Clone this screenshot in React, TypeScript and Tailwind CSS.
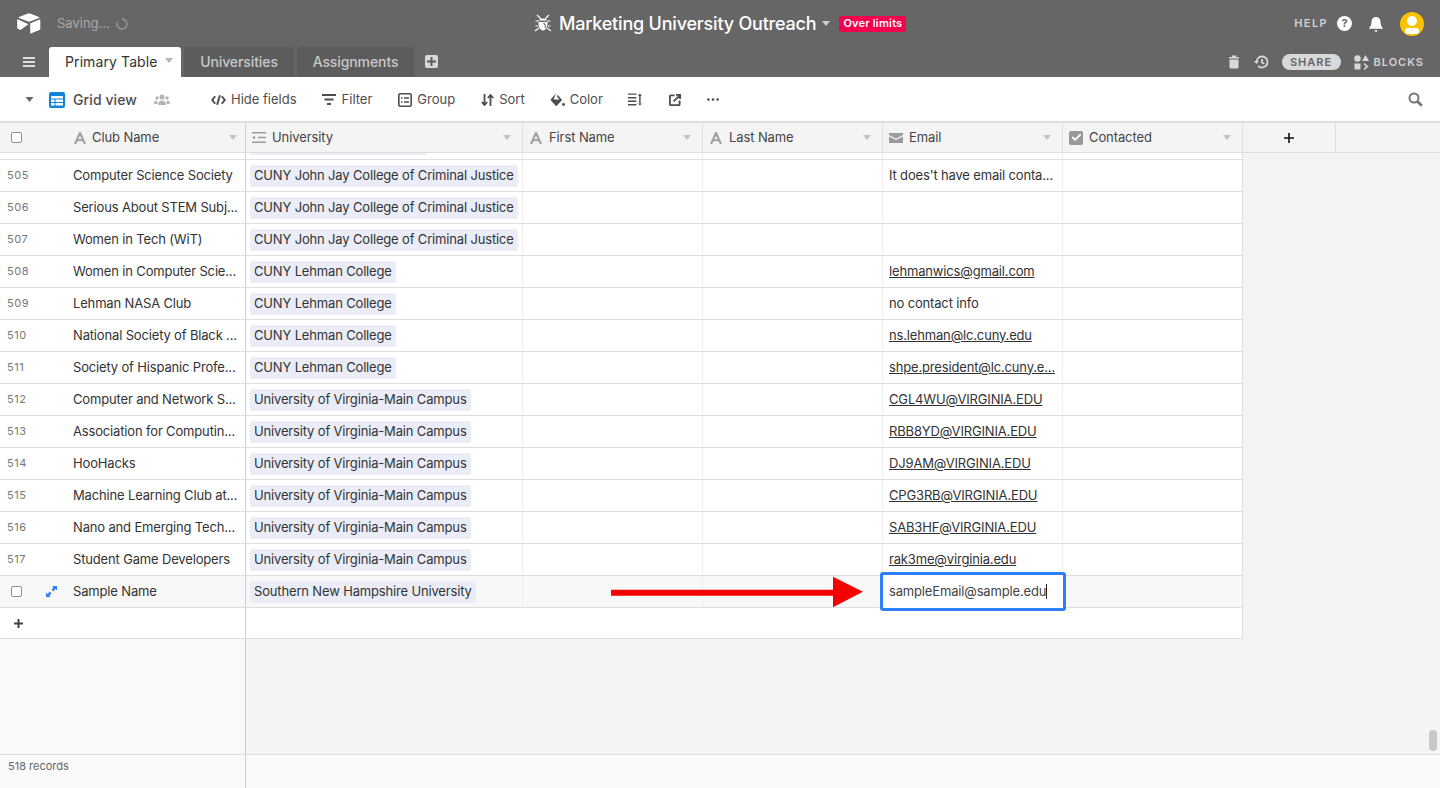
import { Check } from 'lucide-react';

const rows = [
  { id: 505, name: 'Computer Science Society', uni: 'CUNY John Jay College of Criminal Justice', email: "It does't have email conta...", link: false },
  { id: 506, name: 'Serious About STEM Subj...', uni: 'CUNY John Jay College of Criminal Justice', email: '', link: false },
  { id: 507, name: 'Women in Tech (WiT)', uni: 'CUNY John Jay College of Criminal Justice', email: '', link: false },
  { id: 508, name: 'Women in Computer Scie...', uni: 'CUNY Lehman College', email: 'lehmanwics@gmail.com', link: true },
  { id: 509, name: 'Lehman NASA Club', uni: 'CUNY Lehman College', email: 'no contact info', link: false },
  { id: 510, name: 'National Society of Black ...', uni: 'CUNY Lehman College', email: 'ns.lehman@lc.cuny.edu', link: true },
  { id: 511, name: 'Society of Hispanic Profe...', uni: 'CUNY Lehman College', email: 'shpe.president@lc.cuny.e...', link: true },
  { id: 512, name: 'Computer and Network S...', uni: 'University of Virginia-Main Campus', email: 'CGL4WU@VIRGINIA.EDU', link: true },
  { id: 513, name: 'Association for Computin...', uni: 'University of Virginia-Main Campus', email: 'RBB8YD@VIRGINIA.EDU', link: true },
  { id: 514, name: 'HooHacks', uni: 'University of Virginia-Main Campus', email: 'DJ9AM@VIRGINIA.EDU', link: true },
  { id: 515, name: 'Machine Learning Club at...', uni: 'University of Virginia-Main Campus', email: 'CPG3RB@VIRGINIA.EDU', link: true },
  { id: 516, name: 'Nano and Emerging Tech...', uni: 'University of Virginia-Main Campus', email: 'SAB3HF@VIRGINIA.EDU', link: true },
  { id: 517, name: 'Student Game Developers', uni: 'University of Virginia-Main Campus', email: 'rak3me@virginia.edu', link: true },
];

function Caret({ className = '' }: { className?: string }) {
  return (
    <svg viewBox="0 0 8 5" className={`w-2 h-[5px] ${className}`} fill="currentColor">
      <path d="M0 0h8L4 5z" />
    </svg>
  );
}

function TextIcon() {
  return (
    <svg viewBox="0 0 12 12" className="w-3 h-3 text-[#a0a0a0]" fill="none" stroke="currentColor" strokeWidth="2.1">
      <path d="M1 12 6 1l5 11M2.800 8.200h6.400" />
    </svg>
  );
}

function ColumnHead({ width, label, icon }: { width: string; label: string; icon: React.ReactNode }) {
  return (
    <div className={`${width} shrink-0 h-full flex items-center pl-[6px] pr-[11px] border-r border-[#dedede]`}>
      <span className="w-[14px] flex justify-center">{icon}</span>
      <span className="ml-[6px] text-[13px] text-[#444444] tracking-[-0.1px]">{label}</span>
      <Caret className="ml-auto text-[#c4c4c4]" />
    </div>
  );
}

function Chip({ text }: { text: string }) {
  return (
    <span className="ml-[4px] h-[22px] px-[4px] flex items-center rounded-[3px] bg-[#eaedf8] text-[13px] text-[#333333] tracking-[-0.16px] whitespace-nowrap">
      {text}
    </span>
  );
}

function DataCells({ uni, email, link }: { uni?: string; email?: string; link?: boolean }) {
  return (
    <>
      <div className="w-[277px] shrink-0 h-full flex items-center border-r border-[#eeeeee]">{uni && <Chip text={uni} />}</div>
      <div className="w-[180px] shrink-0 h-full border-r border-[#eeeeee]" />
      <div className="w-[180px] shrink-0 h-full border-r border-[#eeeeee]" />
      <div className="w-[180px] shrink-0 h-full flex items-center pl-[6px] border-r border-[#eeeeee] text-[13px] text-[#333333] tracking-[-0.16px] whitespace-nowrap overflow-hidden">
        <span className={link ? 'underline' : ''}>{email}</span>
      </div>
      <div className="w-[180px] shrink-0 h-full" />
    </>
  );
}

export default function App() {
  return (
    <div className="relative w-[1440px] h-[788px] overflow-hidden flex flex-col bg-[#f4f4f4] font-['Inter','Noto_Sans',sans-serif]">
      {/* top bar */}
      <div className="relative h-[47px] shrink-0 bg-[#666666] flex items-center">
        <svg viewBox="0 0 24 21" className="ml-[17px] w-[24px] h-[21px]" fill="#ffffff">
          <path d="M11 .6 2 4.100c-.4.2-.4.6 0 .8l9.200 3.600c.6.200 1.200.2 1.800 0l9-3.600c.4-.2.400-.6 0-.8L13 .6c-.7-.2-1.300-.2-2 0z" />
          <path d="M13.200 10.600V20c0 .3.300.5.600.4l9.200-3.600c.2-.1.300-.3.300-.5V7c0-.3-.3-.5-.6-.4l-9.200 3.600c-.2.100-.3.200-.3.400z" />
          <path d="M11 10.900 1 6.400c-.4-.1-.8.100-.8.500v8.300c0 .2.100.3.300.4l3 1.400L11 11.500c.3-.2.200-.5 0-.6z" />
        </svg>
        <span className="ml-[16px] text-[13px] text-[#a8a8a8]">Saving...</span>
        <svg viewBox="0 0 12 12" className="ml-[6px] w-[12px] h-[12px]" fill="none" stroke="#9a9a9a" strokeWidth="1.300">
          <path d="M6 1a5 5 0 1 1-4.600 3" />
        </svg>
        <div className="absolute left-[534px] top-0 h-[47px] flex items-center">
          <svg viewBox="0 0 18 19" className="w-[18px] h-[19px]" fill="none" stroke="#ffffff" strokeWidth="1.100">
            <path d="M3 1 7 5M15 1l-4 4M1.500 7H5M16.500 7H13M1 17l4-3M17 17l-4-3M1.500 12H4M16.500 12H14" />
            <path d="M5 6.500C5.500 3.800 12.500 3.800 13 6.500z" fill="#ffffff" stroke="none" />
            <path d="M4.500 8h9c.5 4-1.500 8.500-4.500 8.500S4 12 4.500 8z" fill="#ffffff" stroke="none" />
            <path d="M9.500 9c2 1.500 2.500 3 1.500 5" stroke="#666666" />
          </svg>
          <span className="ml-[7px] text-[18px] font-medium text-white tracking-[-0.2px] whitespace-nowrap">Marketing University Outreach</span>
          <Caret className="ml-[6px] text-[#cfcfcf]" />
          <span className="ml-[9px] h-[16px] px-[4px] flex items-center rounded-[3px] bg-[#f5004f] text-white text-[11px] font-semibold tracking-[0.2px] whitespace-nowrap">Over limits</span>
        </div>
        <div className="ml-auto flex items-center pr-[16px]">
          <span className="text-[11px] font-semibold tracking-[1.4px] text-[#d2d2d2]">HELP</span>
          <span className="ml-[9px] w-[15px] h-[15px] rounded-full bg-white flex items-center justify-center text-[#666666] text-[11px] font-bold">?</span>
          <svg viewBox="0 0 14 16" className="ml-[17px] w-[14px] h-[16px]" fill="#ffffff">
            <path d="M7 1a4.500 4.500 0 0 0-4.500 4.500c0 4-1.500 5.500-2.300 6.500-.2.300 0 .7.400.7h12.800c.4 0 .6-.4.400-.7-.8-1-2.300-2.500-2.300-6.500A4.500 4.500 0 0 0 7 1zM5.500 14.300h3a1.500 1.500 0 0 1-3 0z" />
          </svg>
          <span className="ml-[17px] relative w-[24px] h-[24px] rounded-full bg-[#fcc400] overflow-hidden">
            <span className="absolute left-[7px] top-[4px] w-[10px] h-[10px] rounded-full bg-white" />
            <span className="absolute left-[5px] top-[16px] w-[14px] h-[6px] rounded-full bg-white" />
          </span>
        </div>
      </div>

      {/* tabs */}
      <div className="h-[30px] shrink-0 bg-[#666666] flex items-end">
        <svg viewBox="0 0 12 10" className="ml-[23px] mb-[10px] w-[12px] h-[10px]" fill="#dddddd">
          <path d="M0 0h12v2H0zM0 4h12v2H0zM0 8h12v2H0z" />
        </svg>
        <div className="ml-[14px] w-[132px] h-[30px] pb-[1px] bg-white rounded-t-[3px] flex items-center pl-[16px]">
          <span className="text-[14px] text-[#333333] tracking-[0.1px]">Primary Table</span>
          <Caret className="ml-[7px] -mt-[2px] text-[#b5b5b5]" />
        </div>
        <div className="ml-[3px] w-[110px] h-[30px] pb-[1px] bg-[#5c5c5c] rounded-t-[3px] flex items-center justify-center text-[14px] font-medium tracking-[-0.1px] text-[#c8c8c8]">Universities</div>
        <div className="ml-[3px] w-[117px] h-[30px] pb-[1px] bg-[#5c5c5c] rounded-t-[3px] flex items-center justify-center text-[14px] font-medium tracking-[-0.1px] text-[#c8c8c8]">Assignments</div>
        <div className="ml-[11px] mb-[9px] w-[13px] h-[13px] rounded-[2px] bg-[#d8d8d8] flex items-center justify-center">
          <svg viewBox="0 0 9 9" className="w-[9px] h-[9px]" fill="#5c5c5c"><path d="M3.500 0h2v3.500H9v2H5.500V9h-2V5.500H0v-2h3.500z" /></svg>
        </div>
        <div className="ml-auto h-[30px] flex items-center pr-[16px]">
          <svg viewBox="0 0 10 13" className="w-[10px] h-[14px]" fill="#d8d8d8">
            <path d="M3 0h4v1.500h3v1.500H0V1.500h3zM.5 4h9v7.500a1.500 1.500 0 0 1-1.500 1.500H2A1.500 1.500 0 0 1 .5 11.500z" />
          </svg>
          <svg viewBox="0 0 15 14" className="ml-[15px] w-[15px] h-[14px]" fill="none" stroke="#d8d8d8" strokeWidth="1.800">
            <path d="M2.500 7a5.500 5.500 0 1 1 1.700 4M8 4v3.500l2.300 1.300" />
            <path d="M0 6h5L2.500 9z" fill="#d8d8d8" stroke="none" />
          </svg>
          <span className="ml-[13px] w-[59px] h-[16px] rounded-full bg-[#d9d9d9] flex items-center justify-center text-[11px] font-semibold tracking-[1px] text-[#666666]">SHARE</span>
          <svg viewBox="0 0 15 15" className="ml-[13px] w-[15px] h-[15px]" fill="#d8d8d8">
            <circle cx="3.500" cy="3.500" r="3.200" />
            <path d="M11.500 0 15 6H8zM.5 8.500h6v6h-6zM9.500 9l1-1 4 3.500-4 3.500-1-1 2.500-2.500z" />
          </svg>
          <span className="ml-[5px] text-[11px] font-semibold tracking-[1px] text-[#d2d2d2]">BLOCKS</span>
        </div>
      </div>

      {/* view toolbar */}
      <div className="h-[44px] pt-[1px] shrink-0 bg-white flex items-center text-[13px] text-[#4d4d4d]">
        <Caret className="ml-[25px] w-[9px] text-[#666666]" />
        <svg viewBox="0 0 16 16" className="ml-[15px] w-[16px] h-[16px]">
          <rect width="16" height="16" rx="2" fill="#1283da" />
          <path d="M2 4h12v2.500H2zM2 7.500h3.500V10H2zM6.500 7.500H14V10H6.500zM2 11h3.500v2.500H2zM6.500 11H14v2.500H6.500z" fill="#ffffff" />
        </svg>
        <span className="ml-[8px] text-[14px] font-medium text-[#4d4d4d] tracking-[0.1px]">Grid view</span>
        <svg viewBox="0 0 16 12" className="ml-[17px] w-[16px] h-[12px]" fill="#b5b5b5">
          <circle cx="8" cy="3" r="2.500" /><circle cx="3" cy="4" r="1.700" /><circle cx="13" cy="4" r="1.700" />
          <path d="M4 11c0-3 1.500-4.500 4-4.500s4 1.500 4 4.500zM0 10c0-2 1-3.500 3-3.500l.5 3.500zM16 10c0-2-1-3.500-3-3.500l-.5 3.500z" />
        </svg>
        <svg viewBox="0 0 16 12" className="ml-[41px] w-[15px] h-[12px]" fill="none" stroke="#4d4d4d" strokeWidth="2.100">
          <path d="M4.500 2 1.300 6l3.200 4M11.500 2l3.200 4-3.200 4M9.500 1 6.500 11" />
        </svg>
        <span className="ml-[5px]">Hide fields</span>
        <svg viewBox="0 0 14 11" className="ml-[25px] w-[14px] h-[11px]" fill="#4d4d4d"><path d="M0 0h14v2H0zM2.500 4.500h9v2h-9zM5 9h4v2H5z" /></svg>
        <span className="ml-[6px]">Filter</span>
        <svg viewBox="0 0 14 14" className="ml-[26px] w-[14px] h-[14px]" fill="none" stroke="#4d4d4d" strokeWidth="1.600">
          <rect x=".8" y=".8" width="12.400" height="12.400" rx="1.500" />
          <path d="M3 5h1.500M6 5h5M3 9h1.500M6 9h5" />
        </svg>
        <span className="ml-[5px]">Group</span>
        <svg viewBox="0 0 13 12" className="ml-[26px] w-[13px] h-[12px]" fill="none" stroke="#4d4d4d" strokeWidth="1.800">
          <path d="M3.500 0v11M.8 8l2.700 3 2.700-3M9.500 12V1M6.800 4l2.700-3 2.700 3" />
        </svg>
        <span className="ml-[5px]">Sort</span>
        <svg viewBox="0 0 15 14" className="ml-[25px] w-[15px] h-[14px]" fill="#4d4d4d">
          <path d="M6 .5 1 6c-.5.500-.5 1 0 1.500l4.500 5c.5.500 1 .5 1.500 0l5-5.500L7.500 1.500 7.200 4l2.300 2.500h-6z" />
          <path d="M3.500 7h8L6 12.500z" />
          <circle cx="13.500" cy="11.500" r="1.400" />
        </svg>
        <span className="ml-[5px]">Color</span>
        <svg viewBox="0 0 15 13" className="ml-[25px] w-[14px] h-[13px]" fill="#4d4d4d">
          <path d="M0 0h9v1.500H0zM0 3.800h9v1.500H0zM0 7.600h9v1.500H0zM0 11.400h9v1.500H0zM12 2h1.500v9H12zM12.750 0l2.200 2.600h-4.400zM12.750 13l2.200-2.600h-4.400z" />
        </svg>
        <svg viewBox="0 0 13 13" className="ml-[27px] w-[12px] h-[12px]" fill="none" stroke="#4d4d4d" strokeWidth="2">
          <path d="M6 1.500H2A1 1 0 0 0 1 2.500v8.500a1 1 0 0 0 1 1h8.500a1 1 0 0 0 1-1V7M5 8l6-6M7.500 1h4.500v4.500" />
        </svg>
        <svg viewBox="0 0 13 3" className="ml-[26px] w-[12px] h-[3px]" fill="#4d4d4d">
          <circle cx="1.500" cy="1.500" r="1.400" /><circle cx="6.500" cy="1.500" r="1.400" /><circle cx="11.500" cy="1.500" r="1.400" />
        </svg>
        <svg viewBox="0 0 15 15" className="ml-auto mr-[17px] w-[15px] h-[15px]" fill="none" stroke="#777777">
          <circle cx="6" cy="6" r="4.500" strokeWidth="2" />
          <path d="m9.500 9.500 4.300 4.300" strokeWidth="2.800" />
        </svg>
      </div>

      {/* column headers */}
      <div className="h-[32px] shrink-0 flex bg-[#f4f4f4] border-t-2 border-b border-[#dedede]">
        <div className="w-[246px] shrink-0 h-full flex items-center pl-[11px] pr-[8px] border-r border-[#cfcfcf]">
          <span className="w-[11px] h-[11px] rounded-[2px] border border-[#8f8f8f] bg-white" />
          <span className="ml-[52px]"><TextIcon /></span>
          <span className="ml-[6px] text-[13px] text-[#444444] tracking-[-0.1px]">Club Name</span>
          <Caret className="ml-auto text-[#c4c4c4]" />
        </div>
        <ColumnHead
          width="w-[277px]"
          label="University"
          icon={
            <svg viewBox="0 0 14 11" className="w-[14px] h-[11px]" fill="#9a9a9a">
              <path d="M0 0h14v1.500H0zM6 4.700h8v1.500H6zM0 9.500h14V11H0zM0 5.500l3-2v4z" />
            </svg>
          }
        />
        <ColumnHead width="w-[180px]" label="First Name" icon={<TextIcon />} />
        <ColumnHead width="w-[180px]" label="Last Name" icon={<TextIcon />} />
        <ColumnHead
          width="w-[180px]"
          label="Email"
          icon={
            <svg viewBox="0 0 14 10" className="w-[14px] h-[10px]" fill="#9a9a9a">
              <path d="M0 0h14v2L7 5.500 0 2zM0 3.500 7 7l7-3.500V10H0z" />
            </svg>
          }
        />
        <ColumnHead
          width="w-[180px]"
          label="Contacted"
          icon={
            <span className="w-[14px] h-[14px] rounded-[2px] bg-[#999999] flex items-center justify-center">
              <Check className="w-[11px] h-[11px] text-white" strokeWidth={4} />
            </span>
          }
        />
        <div className="w-[93px] shrink-0 h-full flex items-center justify-center border-r border-[#dedede]">
          <svg viewBox="0 0 10 10" className="w-[10px] h-[10px]" fill="#111111"><path d="M4.200 0h1.600v4.200H10v1.600H5.800V10H4.200V5.800H0V4.200h4.200z" /></svg>
        </div>
      </div>

      {/* grid body */}
      <div className="flex-1 flex flex-col min-h-0">
        <div className="w-[1243px] shrink-0 border-r border-[#dedede]">
          <div className="h-[7px] flex bg-white border-b border-[#dedede]">
            <div className="w-[246px] shrink-0 border-r border-[#cfcfcf]" />
            <div className="w-[277px] shrink-0 border-r border-[#eeeeee]">
              <div className="ml-[4px] w-[177px] h-[2px] rounded-b-[2px] bg-[#eaedf8]" />
            </div>
            <div className="w-[180px] shrink-0 border-r border-[#eeeeee]" />
            <div className="w-[180px] shrink-0 border-r border-[#eeeeee]" />
            <div className="w-[180px] shrink-0 border-r border-[#eeeeee]" />
          </div>
          {rows.map(r => (
            <div key={r.id} className="h-[32px] flex items-center bg-white border-b border-[#dedede]">
              <div className="w-[246px] shrink-0 h-full flex items-center border-r border-[#cfcfcf]">
                <span className="ml-[7px] w-[66px] text-[11px] text-[#777777] tracking-[0.5px]">{r.id}</span>
                <span className="text-[13px] text-[#333333] tracking-[-0.16px] whitespace-nowrap">{r.name}</span>
              </div>
              <DataCells uni={r.uni} email={r.email} link={r.link} />
            </div>
          ))}
          <div className="relative h-[32px] flex items-center bg-[#f8f8f8] border-b border-[#dedede]">
            <div className="w-[246px] shrink-0 h-full flex items-center border-r border-[#cfcfcf]">
              <span className="ml-[11px] w-[11px] h-[11px] rounded-[2px] border border-[#8f8f8f] bg-white" />
              <svg viewBox="0 0 11 11" className="ml-[24px] w-[11px] h-[11px]" fill="#2d7ff9">
                <path d="M6.500 0H11v4.500L9.300 2.800 7.500 5.500l-2 -2 1.900-1.800zM4.500 11H0V6.500l1.700 1.700 1.800-2.700 2 2-1.900 1.800z" />
              </svg>
              <span className="ml-[16px] text-[13px] text-[#333333] tracking-[-0.16px] whitespace-nowrap">Sample Name</span>
            </div>
            <DataCells uni="Southern New Hampshire University" />
            {/* red annotation arrow */}
            <svg viewBox="0 0 254 32" className="absolute left-[611px] top-0 w-[254px] h-[32px]" fill="#f50000">
              <path d="M0 13.700h222V.7l30 15-30 15.600V19.700H0z" />
            </svg>
            {/* focused cell editor */}
            <div className="absolute left-[880px] -top-[4px] w-[186px] h-[39px] rounded-[3px] border-[3px] border-[#2d7ff9] bg-white flex items-center pl-[6px] text-[13px] text-[#444444] tracking-[-0.16px] whitespace-nowrap">
              sampleEmail@sample.edu<span className="w-px h-[15px] bg-[#222222]" />
            </div>
          </div>
          <div className="h-[31px] flex items-center bg-white border-b border-[#dedede]">
            <div className="w-[246px] shrink-0 h-full flex items-center border-r border-[#cfcfcf]">
              <svg viewBox="0 0 9 9" className="ml-[14px] w-[9px] h-[9px]" fill="#444444"><path d="M3.500 0h2v3.500H9v2H5.500V9h-2V5.500H0v-2h3.500z" /></svg>
            </div>
          </div>
        </div>
        <div className="flex-1 min-h-0 flex">
          <div className="w-[246px] h-full bg-[#f9f9f9] border-r border-[#cfcfcf]" />
        </div>
      </div>

      {/* scrollbar thumb */}
      <div className="absolute left-[1429px] top-[730px] w-[8px] h-[21px] rounded-full bg-[#c8c8c8]" />

      {/* footer */}
      <div className="h-[34px] shrink-0 flex bg-[#fafafa] border-t border-[#dedede]">
        <div className="w-[246px] h-full pl-[8px] pt-[3px] border-r border-[#cfcfcf] text-[11px] text-[#666666]">518 records</div>
      </div>
    </div>
  );
}
